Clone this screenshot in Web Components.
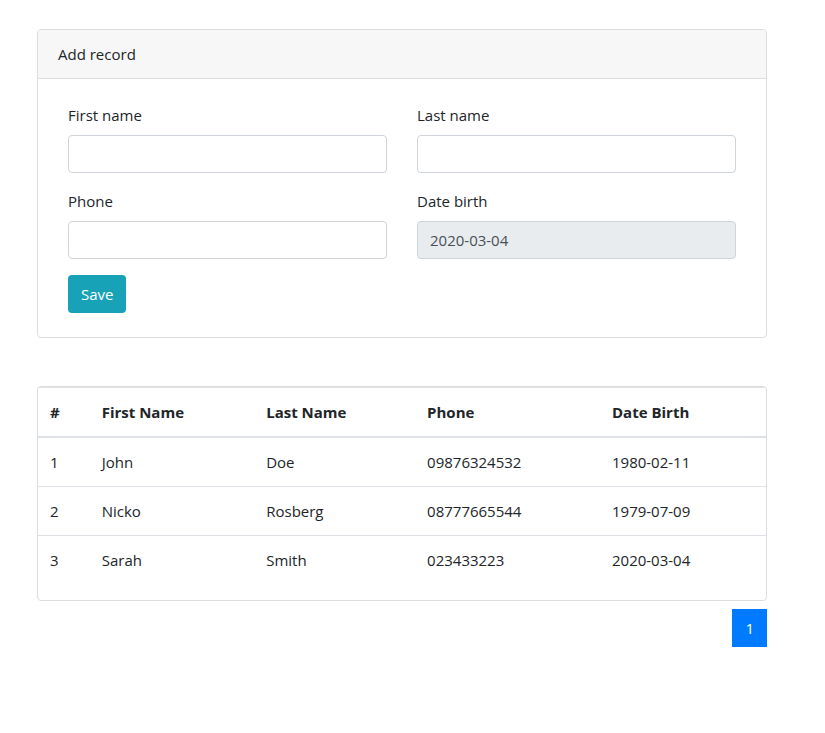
<!DOCTYPE html>
<html lang="en">
<head>
<meta charset="utf-8">
<meta name="viewport" content="width=device-width, initial-scale=1">
<title>Records</title>
<style>
  body {
    margin: 0;
    background: #fff;
    color: #212529;
    font: 15px/24px "Open Sans", "Noto Sans", sans-serif;
  }
</style>
</head>
<body>
<record-page>
  <panel-card>
    <span slot="header">Add record</span>
    <record-form></record-form>
  </panel-card>
  <panel-card>
    <record-table></record-table>
  </panel-card>
  <page-nav slot="footer"></page-nav>
</record-page>

<script>
class ShadowElement extends HTMLElement {
  constructor() {
    super();
    this.attachShadow({ mode: "open" }).innerHTML = this.render();
  }
}

customElements.define("record-page", class extends ShadowElement {
  render() {
    return `
      <style>
        :host { display: block; padding: 29px 58px 24px 37px; }
        main { display: grid; gap: 48px; }
        footer { display: flex; justify-content: flex-end; margin-top: 8px; }
      </style>
      <main><slot></slot></main>
      <footer><slot name="footer"></slot></footer>`;
  }
});

customElements.define("panel-card", class extends ShadowElement {
  render() {
    return `
      <style>
        :host { display: block; border: 1px solid #dcdddf; border-radius: 4px; overflow: hidden; }
        header { padding: 12px 20px; background: #f7f7f7; border-bottom: 1px solid #dcdddf; }
        header[hidden] { display: none; }
      </style>
      <header><slot name="header"></slot></header>
      <slot></slot>`;
  }
  connectedCallback() {
    const slot = this.shadowRoot.querySelector("slot[name=header]");
    const update = () => { slot.parentElement.hidden = !slot.assignedElements().length; };
    slot.addEventListener("slotchange", update);
    update();
  }
});

customElements.define("text-field", class extends HTMLElement {
  connectedCallback() {
    if (this.shadowRoot) return;
    this.attachShadow({ mode: "open" }).innerHTML = `
      <style>
        :host { display: block; }
        label { display: block; margin-bottom: 8px; }
        input {
          display: block; box-sizing: border-box; width: 100%; height: 38px;
          margin: 0; padding: 6px 12px; border: 1px solid #ced4da; border-radius: 4px;
          background: #fff; color: #495057; font: inherit;
        }
        input:read-only { background: #e8ecef; }
        input:focus { outline: 0; border-color: #80bdff; box-shadow: 0 0 0 3px #bfdeff; }
      </style>
      <label for="field"></label>
      <input id="field" type="text">`;
    this.shadowRoot.querySelector("label").textContent = this.getAttribute("label");
    const input = this.shadowRoot.querySelector("input");
    input.value = this.getAttribute("value") || "";
    input.readOnly = this.hasAttribute("readonly");
  }
});

customElements.define("record-form", class extends ShadowElement {
  render() {
    return `
      <style>
        :host { display: block; padding: 24px 30px; }
        form { display: grid; grid-template-columns: 1fr 1fr; gap: 16px 30px; }
        button {
          grid-column: 1 / -1; justify-self: start; height: 38px; padding: 0 13px;
          border: 0; border-radius: 4px; background: #17a2b8; color: #fff;
          font: inherit; cursor: pointer;
        }
        button:hover { background: #138496; }
      </style>
      <form>
        <text-field label="First name"></text-field>
        <text-field label="Last name"></text-field>
        <text-field label="Phone"></text-field>
        <text-field label="Date birth" value="2020-03-04" readonly></text-field>
        <button type="button">Save</button>
      </form>`;
  }
});

customElements.define("record-table", class extends ShadowElement {
  render() {
    const rows = [
      ["1", "John", "Doe", "09876324532", "1980-02-11"],
      ["2", "Nicko", "Rosberg", "08777665544", "1979-07-09"],
      ["3", "Sarah", "Smith", "023433223", "2020-03-04"]
    ];
    return `
      <style>
        :host { display: block; padding-bottom: 16px; }
        table { width: 100%; table-layout: fixed; border-spacing: 0; text-align: left; }
        th, td { padding: 12px; border-top: 1px solid #dee2e6; }
        th { font-weight: 700; border-bottom: 2px solid #dee2e6; }
        tbody tr:first-child td { border-top: 0; }
        col:nth-child(1) { width: 7.1%; }
        col:nth-child(2) { width: 22.6%; }
        col:nth-child(3) { width: 22.1%; }
        col:nth-child(4) { width: 25.4%; }
      </style>
      <table>
        <colgroup><col><col><col><col><col></colgroup>
        <thead><tr>${["#", "First Name", "Last Name", "Phone", "Date Birth"].map(t => `<th scope="col">${t}</th>`).join("")}</tr></thead>
        <tbody>${rows.map(r => `<tr>${r.map(t => `<td>${t}</td>`).join("")}</tr>`).join("")}</tbody>
      </table>`;
  }
});

customElements.define("page-nav", class extends ShadowElement {
  render() {
    return `
      <style>
        :host { display: block; }
        a { display: block; padding: 7px 13px; background: #007bff; color: #fff; text-decoration: none; }
      </style>
      <nav aria-label="Pages"><a href="#1" aria-current="page">1</a></nav>`;
  }
});
</script>
</body>
</html>
